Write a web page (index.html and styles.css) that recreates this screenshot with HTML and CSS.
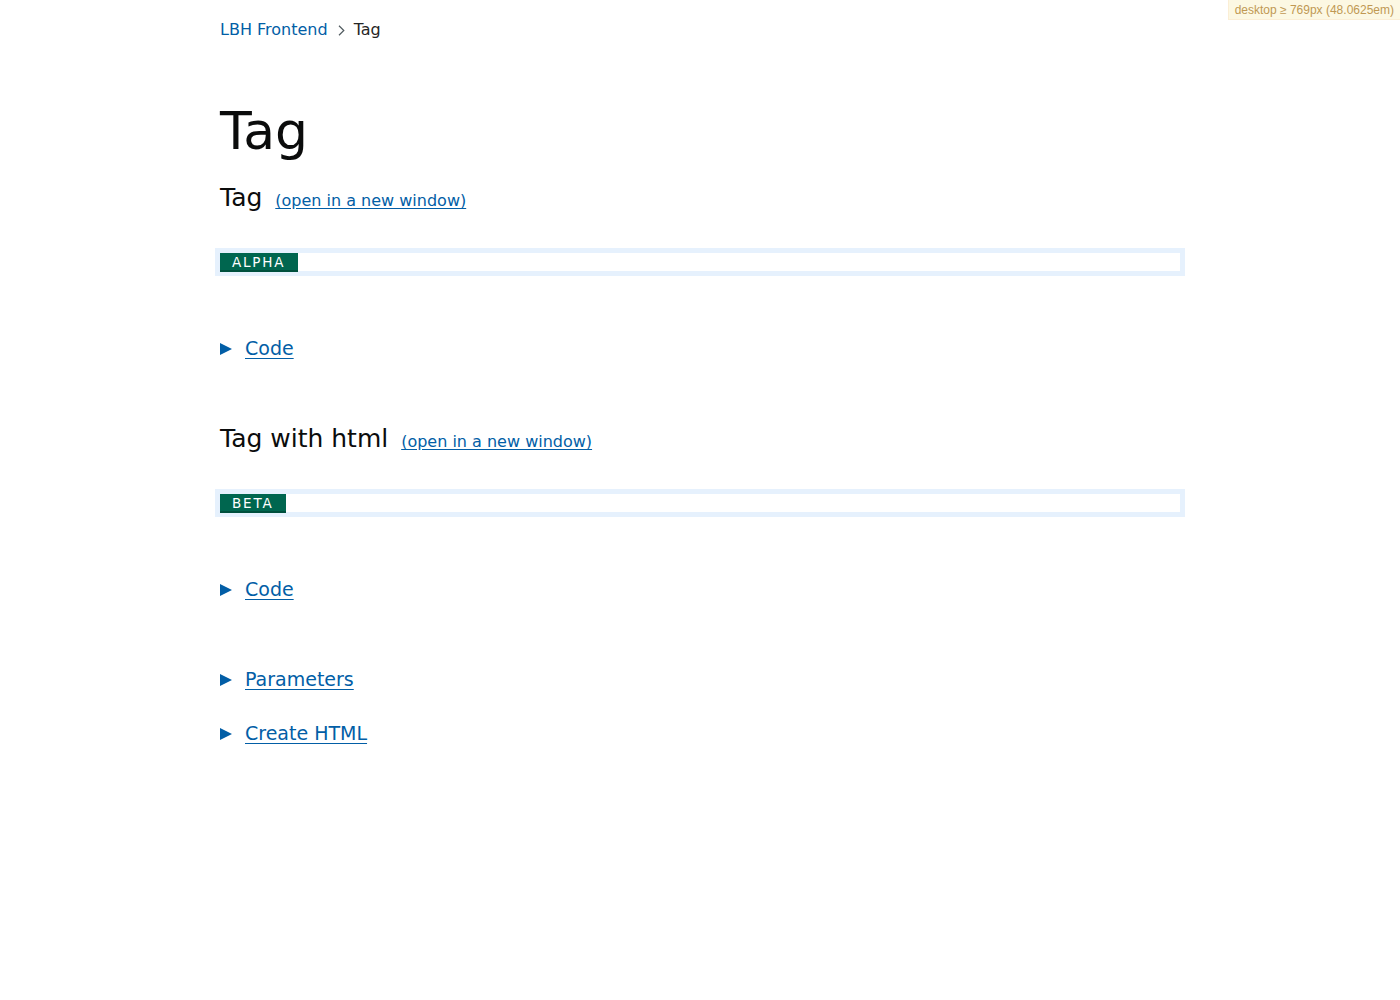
FILE: index.html
```html
<!DOCTYPE html>
<html lang="en">
<head>
<meta charset="utf-8">
<title>Tag – LBH Frontend</title>
<link rel="stylesheet" href="styles.css">
</head>
<body>
<div class="mq-badge">desktop ≥ 769px (48.0625em)</div>
<div class="container">
  <nav class="breadcrumbs">
    <a class="crumb-link" href="#">LBH Frontend</a>
    <svg class="chevron" width="7" height="11" viewBox="0 0 7 11"><path d="M1 0.8 L5.8 5.5 L1 10.2" fill="none" stroke="#505a5f" stroke-width="1.2"/></svg>
    <span class="crumb-current">Tag</span>
  </nav>

  <h1 class="page-title">Tag</h1>

  <section class="example">
    <h2 class="example-title">Tag <a class="example-link" href="#">(open in a new window)</a></h2>
    <div class="frame"><strong class="tag">Alpha</strong></div>
    <details class="details details-code"><summary class="summary"><span class="summary-text">Code</span></summary></details>
  </section>

  <section class="example">
    <h2 class="example-title">Tag with html <a class="example-link" href="#">(open in a new window)</a></h2>
    <div class="frame"><strong class="tag">Beta</strong></div>
    <details class="details details-code"><summary class="summary"><span class="summary-text">Code</span></summary></details>
  </section>

  <details class="details details-params"><summary class="summary"><span class="summary-text">Parameters</span></summary></details>
  <details class="details details-create"><summary class="summary"><span class="summary-text">Create HTML</span></summary></details>
</div>
</body>
</html>
```

FILE: styles.css
```css
html, body {
  margin: 0;
  padding: 0;
  background: #ffffff;
}

body {
  font-family: "DejaVu Sans", "Noto Sans", sans-serif;
  color: #0b0c0c;
  height: 1000px;
}

.mq-badge {
  position: fixed;
  top: 0;
  right: 0;
  background-color: #fcf8e3;
  border-bottom: 1px solid #fbeed5;
  border-left: 1px solid #fbeed5;
  color: #c09853;
  font-family: "Liberation Sans", Arial, sans-serif;
  font-size: 12px;
  line-height: 13px;
  padding: 4px 6px 2px 6px;
}

.container {
  width: 960px;
  margin: 0 auto;
}

.breadcrumbs {
  display: flex;
  align-items: center;
  padding-top: 20px;
  height: 20px;
  font-size: 16px;
  line-height: 20px;
}

.crumb-link {
  color: #025ea6;
  text-decoration: none;
}

.chevron {
  margin: 0 9px 0 10px;
}

.crumb-current {
  color: #262626;
}

.page-title {
  margin: 61px 0 0 0;
  height: 60px;
  font-size: 52px;
  line-height: 60px;
  font-weight: normal;
}

.example-title {
  margin: 22px 0 0 0;
  height: 30px;
  font-size: 25px;
  line-height: 30px;
  font-weight: normal;
}

.example + .example .example-title {
  margin-top: 63px;
}

.example-link {
  font-size: 16px;
  line-height: 16px;
  color: #025ea6;
  margin-left: 5px;
  text-decoration: underline;
  text-underline-offset: 2px;
}

.frame {
  margin: 35px 0 0 -5px;
  width: 960px;
  height: 18px;
  border: 5px solid #e6f1fd;
  display: flex;
  align-items: flex-start;
}

.tag {
  display: block;
  height: 17px;
  padding: 0 13px 0 12px;
  background: #00664f;
  border-bottom: 2px solid #00503d;
  color: #ffffff;
  font-size: 13.5px;
  line-height: 18px;
  font-weight: normal;
  text-transform: uppercase;
  letter-spacing: 1.8px;
}

.details {
  font-size: 19px;
  line-height: 25px;
}

.details-code {
  margin-top: 60px;
}

.details-params {
  margin-top: 65px;
}

.details-create {
  margin-top: 29px;
}

.summary {
  display: flex;
  align-items: center;
  height: 25px;
  list-style: none;
  cursor: pointer;
  color: #025ea6;
}

.summary::-webkit-details-marker {
  display: none;
}

.summary::before {
  content: "";
  width: 0;
  height: 0;
  border-left: 12px solid #025ea6;
  border-top: 6.5px solid transparent;
  border-bottom: 6.5px solid transparent;
  margin-right: 13px;
}

.summary-text {
  text-decoration: underline;
  text-underline-offset: 3px;
  text-decoration-thickness: 1px;
}
```
